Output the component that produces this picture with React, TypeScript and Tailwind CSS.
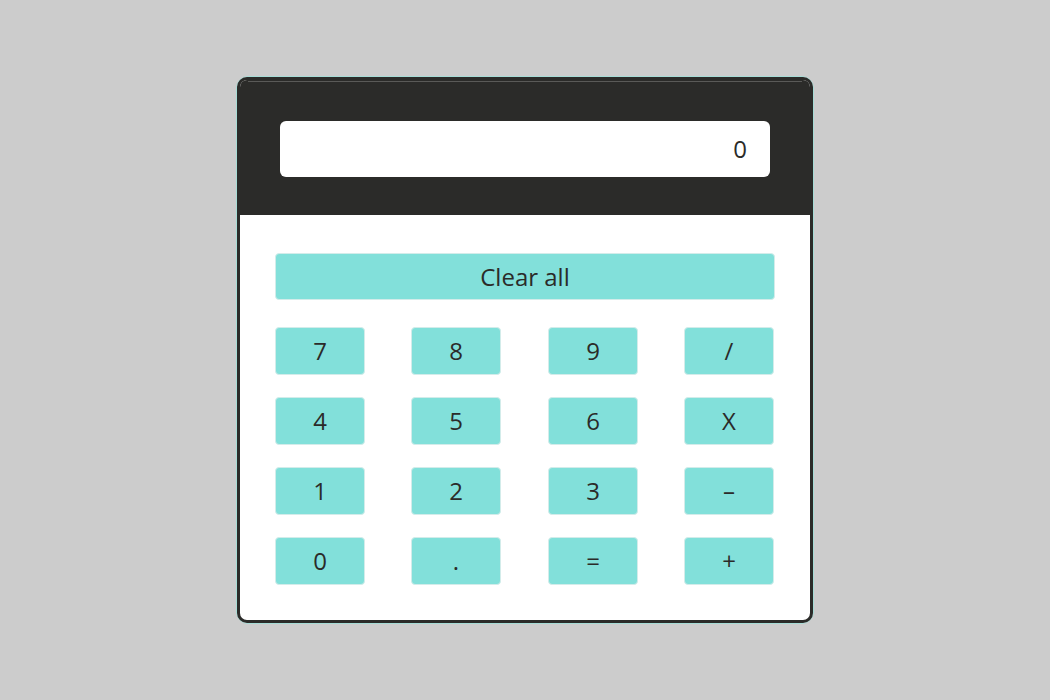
import React from "react";

const rows = [
  ["7", "8", "9", "/"],
  ["4", "5", "6", "X"],
  ["1", "2", "3", "–"],
  ["0", ".", "=", "+"],
];

export default function App() {
  return (
    <div
      className="w-[1050px] h-[700px] bg-[#cccccc] flex items-center justify-center"
      style={{ fontFamily: '"Open Sans", "Noto Sans", sans-serif' }}
    >
      <div className="w-[578px] h-[548px] border border-[#a6dcd6] rounded-[12px]">
        <div className="h-full border-[3px] border-[#2b2b29] rounded-[10px] overflow-hidden flex flex-col bg-white">
          <div className="h-[135px] bg-[#2b2b29] px-[40px] pt-[41px] relative">
            <div className="absolute top-[1px] left-[8px] right-[8px] h-px bg-[#5a5a58]" />
            <div className="h-[56px] bg-white rounded-[6px] flex items-center justify-end pr-[23px] text-[24px] text-[#2b2b29]">
              0
            </div>
          </div>
          <div className="flex-1 px-[35px] pt-[38px] flex flex-col">
            <button className="w-[500px] h-[47px] bg-[#82e0da] border border-[#d3ecea] rounded-[4px] text-[24px] text-[#2b2b29] flex items-center justify-center">
              Clear all
            </button>
            <div className="mt-[27px] flex flex-col gap-[22px]">
              {rows.map((r, i) => (
                <div key={i} className="flex gap-x-[46px] w-[500px]">
                  {r.map((k, j) => (
                    <button
                      key={k}
                      className={
                        (j === 2 ? "ml-px " : "") +
                        "w-[90px] h-[48px] bg-[#82e0da] border border-[#d3ecea] rounded-[4px] text-[24px] text-[#2b2b29] flex items-center justify-center"
                      }
                    >
                      {k}
                    </button>
                  ))}
                </div>
              ))}
            </div>
          </div>
        </div>
      </div>
    </div>
  );
}
